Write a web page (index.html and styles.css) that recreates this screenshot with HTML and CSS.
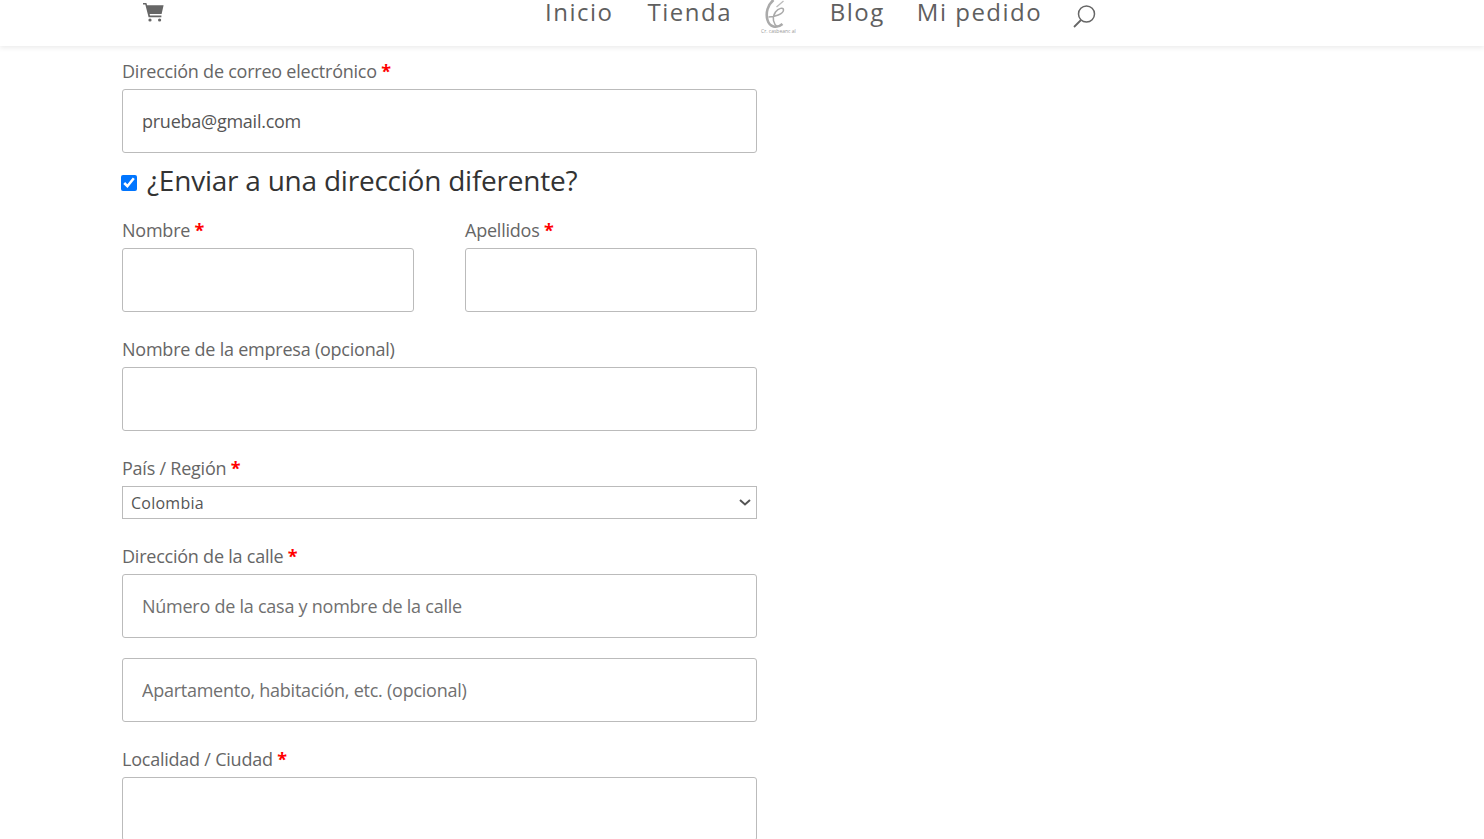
FILE: index.html
```html
<!DOCTYPE html>
<html lang="es">
<head>
<meta charset="utf-8">
<title>Finalizar compra</title>
<link rel="stylesheet" href="styles.css">
</head>
<body>
<header class="site-header">
  <a class="cart" href="#" aria-label="Carrito">
    <svg width="21" height="19" viewBox="0 0 21 19"><path fill="#666" d="M0 0h3.400l.7 2.200H20.600l-2 8.800H6.600l.4 1.600h11.400v1.600H5.600L2.300 1.600H0z"/><circle cx="7" cy="17" r="1.600" fill="#666"/><circle cx="16.600" cy="17" r="1.600" fill="#666"/></svg>
  </a>
  <nav class="nav">
    <a href="#">Inicio</a>
    <a href="#">Tienda</a>
    <span class="logo">
      <svg width="34" height="29" viewBox="1.500 0 34 29"><path fill="none" stroke="#aaa" stroke-width="2.600" d="M14 0C8 5 6 13 8 20c2 7 9 9 15 4"/><path fill="none" stroke="#aaa" stroke-width="1.500" d="M9 17c6 0 15-3 15-7 0-3-5-2-8 2-4 6-2 12 2 15"/><path fill="none" stroke="#bbb" stroke-width="1.300" d="M17 7l7-6"/></svg>
      <span class="logo-text">Cr. casbeanc al</span>
    </span>
    <a href="#">Blog</a>
    <a href="#">Mi pedido</a>
  </nav>
  <a class="search" href="#" aria-label="Buscar">
    <svg width="23" height="23" viewBox="0 0 23 23"><circle cx="13.500" cy="9" r="8" fill="none" stroke="#666" stroke-width="1.500"/><path d="M8 15l-7 7" fill="none" stroke="#666" stroke-width="1.800"/></svg>
  </a>
</header>
<main class="form">
  <div class="field">
    <label>Dirección de correo electrónico <abbr>*</abbr></label>
    <input class="text" type="email" value="prueba@gmail.com">
  </div>
  <h3 class="ship"><input type="checkbox" checked><span>¿Enviar a una dirección diferente?</span></h3>
  <div class="two">
    <div class="field">
      <label>Nombre <abbr>*</abbr></label>
      <input class="text" type="text">
    </div>
    <div class="field">
      <label>Apellidos <abbr>*</abbr></label>
      <input class="text" type="text">
    </div>
  </div>
  <div class="field">
    <label>Nombre de la empresa (opcional)</label>
    <input class="text" type="text">
  </div>
  <div class="field">
    <label>País / Región <abbr>*</abbr></label>
    <select class="select"><option>Colombia</option></select>
  </div>
  <div class="field">
    <label>Dirección de la calle <abbr>*</abbr></label>
    <input class="text" type="text" placeholder="Número de la casa y nombre de la calle">
  </div>
  <div class="field extra">
    <input class="text" type="text" placeholder="Apartamento, habitación, etc. (opcional)">
  </div>
  <div class="field">
    <label>Localidad / Ciudad <abbr>*</abbr></label>
    <input class="text" type="text">
  </div>
</main>
</body>
</html>
```
FILE: styles.css
```css
* { box-sizing: border-box; }
html, body { margin: 0; height: 839px; overflow: hidden; background: #fff; }
body { font-family: "Open Sans", sans-serif; color: #666; font-size: 18px; }

.site-header {
  height: 46px;
  display: flex;
  align-items: flex-start;
  padding-left: 143px;
  background: #fff;
  box-shadow: 0 2px 5px rgba(0, 0, 0, .08);
}
.cart { display: block; margin-top: 3px; height: 19px; }
.nav { display: flex; align-items: flex-start; margin-left: 381px; }
.nav a {
  color: #5f5f5f;
  text-decoration: none;
  font-size: 24px;
  font-weight: 500;
  letter-spacing: 1.5px;
  line-height: 24px;
  margin-left: 32px;
  white-space: nowrap;
}
.nav a:first-child { margin-left: 0; margin-right: 2px; }
.logo { display: flex; flex-direction: column; flex: 0 0 34px; margin-left: 29px; margin-right: 2px; }
.logo svg { display: block; }
.logo-text { font-size: 5px; line-height: 5px; color: #999; white-space: nowrap; }
.search { display: block; margin: 5px 0 0 31px; height: 23px; }

.form { width: 635px; margin-left: 122px; padding-top: 11px; }
.field { margin-bottom: 23px; }
.field label { display: block; line-height: 28px; margin-bottom: 4px; letter-spacing: -.23px; }
.field abbr { color: #f00; font-weight: 700; text-decoration: none; }
.field.extra { margin-top: -3px; }
.text {
  display: block;
  width: 100%;
  height: 64px;
  padding: 0 19px;
  border: 1px solid #bbb;
  border-radius: 3px;
  background: #fff;
  font: 18px "Open Sans", sans-serif;
  letter-spacing: -.25px;
  color: #555;
}
.text::placeholder { color: #707070; opacity: 1; }
.select {
  display: block;
  width: 100%;
  height: 33px;
  padding: 0 8px;
  border: 1px solid #bbb;
  border-radius: 0;
  appearance: none;
  background: #fff url("data:image/svg+xml,%3Csvg xmlns='http://www.w3.org/2000/svg' width='12' height='7'%3E%3Cpath d='M1 1l5 4.500L11 1' fill='none' stroke='%23555' stroke-width='2'/%3E%3C/svg%3E") no-repeat right 5px center;
  font: 16px "Open Sans", sans-serif;
  letter-spacing: .25px;
  color: #555;
}
.ship {
  display: flex;
  align-items: center;
  height: 40px;
  margin: -16px 0 16px -1px;
  font-size: 28px;
  font-weight: 400;
  letter-spacing: -.23px;
  color: #333;
}
.ship input { width: 16px; height: 16px; margin: 6px 10px 0 0; }
.two { display: flex; gap: 51px; }
.two .field { flex: 1; }
```
